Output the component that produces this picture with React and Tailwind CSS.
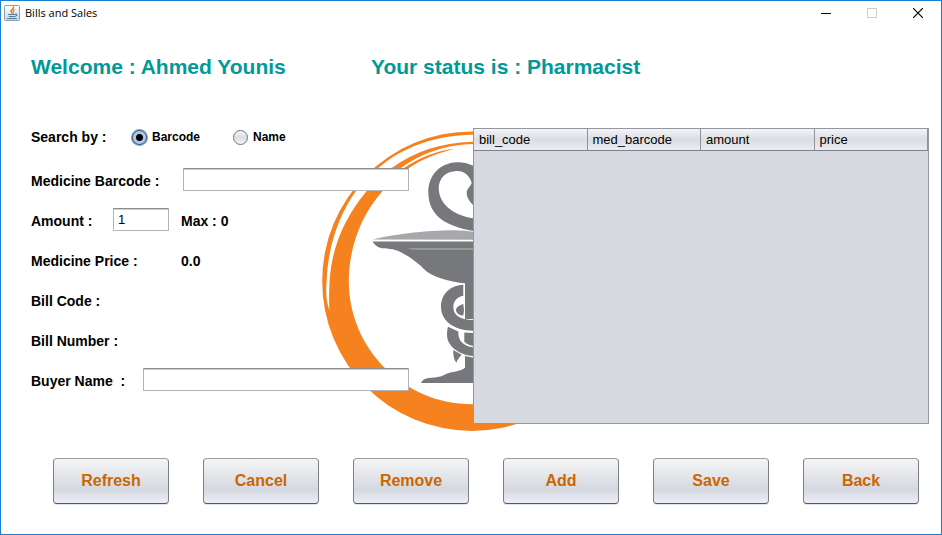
import { useState } from "react";

const BUTTONS = ["Refresh", "Cancel", "Remove", "Add", "Save", "Back"];
const COLUMNS = ["bill_code", "med_barcode", "amount", "price"];

const FIELD =
  "mb-[3px] h-[23px] rounded-none border border-[#b4b4b6] border-t-[#8c8c8e] bg-white px-1 font-['Liberation_Sans',sans-serif] text-[13px] font-normal text-black shadow-[inset_0_1px_0_#cfcfd0] outline-none";

const RADIO =
  "h-[15px] w-[15px] shrink-0 appearance-none rounded-full border border-[#6f737b] bg-linear-to-b from-[#f6f7f9] via-[#dcdee4] to-[#f4f5f8] outline-none checked:border-[#1f3f66] checked:bg-[radial-gradient(circle_at_center,#000_0,#000_3px,#a9c3e0_4px,#cfdff0_100%)] checked:shadow-[0_0_0_1px_#6ea3d6]";

function JavaIcon() {
  return (
    <svg width="16" height="16" viewBox="0 0 16 16" aria-hidden="true">
      <defs>
        <linearGradient id="tile" x1="0" y1="0" x2="0" y2="1">
          <stop offset="0" stopColor="#ffffff" />
          <stop offset="1" stopColor="#c9d6e0" />
        </linearGradient>
      </defs>
      <rect x="0.5" y="0.5" width="15" height="15" rx="1" fill="url(#tile)" stroke="#8b9cab" />
      <g fill="none" strokeLinecap="round">
        <path d="M9.6 2c.5 1.900-3 2.500-2.600 4.200.1.700.800 1 .900 1.800" stroke="#e8791c" strokeWidth="1.500" />
        <path d="M10.600 4.800c-1.500.700-1.900 1.300-1.200 2.100.4.500.1.900-.3 1.200" stroke="#e8791c" strokeWidth="1.200" />
        <path d="M4.500 9.500h6M5.200 11.500h5M11.500 9.100c1.800-.5 1.900 1.600-.2 2.200" stroke="#4d7896" strokeWidth="1.100" />
        <path d="M3.500 13.500h8.800" stroke="#4d7896" strokeWidth="1.100" />
      </g>
    </svg>
  );
}

function PharmacyLogo() {
  return (
    <svg
      className="pointer-events-none absolute top-[3px] left-[309px]"
      width="320"
      height="320"
      viewBox="310 120 320 320"
      aria-hidden="true"
    >
      <circle cx="472" cy="281.200" r="149.800" fill="#f6821f" />
      <path
        fill="#fff"
        d="M329.300 310C325.800 300 325.800 290 326.700 280C328 245 340 213 356 191C363 181 370 174 378.300 168C405 145.500 437 135.500 472 134.800C540 134.800 590 180 605 235C580 175 530 141.500 472 141.800C441 142.500 414 152 391.700 168C382 174.500 374 182 366.700 191C345 217 332 246 329.700 280C329 291 329 300 329.300 310Z"
      />
      <path
        fill="#fff"
        d="M348.800 281C349 246 362 214 382.700 191C391 181.500 399 174 409 168C422 159 437 153.500 454 149C436 150.500 418 158.500 404 168C398 171.500 393 176 388 181C392 176 396 171.500 400.700 168C422 153 445 145 472 144C540 146 595 205 595 281C595 350 540 404.200 472 404.200C404 404.200 348.800 349 348.800 281Z"
      />
      <g fill="#77787b">
        <path d="M473 165.800C468 163 462 162 457 162.200C439 163 428.300 176 428.300 192C428.500 217 447 226 473 231L480 232V219.500L473 218.300C456 215.500 439 206 438.700 188C438.900 178 446 171.200 457 171C465 170.800 470.500 177 471.700 183.300C470 187 466.700 189 466.700 192.700C466.700 198 470 201.500 473 205L480 206V170Z" />
        <path d="M372.700 241.600H485V283.300H475V319H465V283.300C458 282.800 450 281.300 443 279C430 275 426 271.500 421 266C414 260 409 256.500 403 253.500C396 249 389 248.700 382 248.300C377 247.600 374 244 372.700 241.600Z" />
        <path d="M463.300 284.700C449 285.500 441 295 441 306.700C441 320 453 330.500 473 330.700H480V320H473C460 320 453.300 315 453.300 307.300C453.300 301 457 297 463.300 295.700Z" />
        <path d="M463.300 304C459 305.500 456 307 456 310.500C456.500 313.500 460 315.600 463.300 315.600L464 310Z" />
        <path d="M448 326.700L458.300 331.400C457.700 341 464 346 473 347.300H480V356H473C459 355 447 346 447 335C447 332 447.300 329 448 326.700Z" />
        <path d="M464.300 332.500L480 333.500V346H473C469 345 466 343.500 464.300 341.700Z" />
        <path d="M453.300 350L461.700 354.800C459.500 357 457.500 360 456.300 362.700C454 360 453 355 453.300 350Z" />
        <path d="M465 356L473 357.500H482V383H421C422 380 425 378.600 429 378C437 377.300 441 377 446 374C451 371.500 461 371.500 465 367.700Z" />
      </g>
      <path fill="#a7a8ab" d="M372.700 239.500C394 234 428 230.500 453 230.300C463 230.300 468 231 473 232H480V239.800Z" />
      <path fill="#98999c" d="M408 248H480V250H416C412 249.800 410 249 408 248Z" />
    </svg>
  );
}

function Row({ children }) {
  return <div className="flex h-10 items-center">{children}</div>;
}

export default function App() {
  const [mode, setMode] = useState("barcode");
  const windowButton = "flex h-6 w-[46px] items-center justify-center";

  return (
    <div className="flex min-h-screen flex-col border border-[#1a7ed4] bg-white font-['Liberation_Sans',Arial,sans-serif] text-black">
      <header className="flex h-6 items-center">
        <div className="flex items-center gap-[5px] pl-[3px]">
          <JavaIcon />
          <h1 className="font-['Open_Sans',sans-serif] text-[11px] leading-4">Bills and Sales</h1>
        </div>
        <div className="ml-auto flex">
          <button type="button" aria-label="Minimize" className={windowButton}>
            <svg width="10" height="10" viewBox="0 0 10 10"><path d="M0 5.500h10" stroke="#000" /></svg>
          </button>
          <button type="button" aria-label="Maximize" className={windowButton} disabled>
            <svg width="10" height="10" viewBox="0 0 10 10"><path d="M.5.5h9v9h-9z" fill="none" stroke="#ccc" /></svg>
          </button>
          <button type="button" aria-label="Close" className={windowButton}>
            <svg width="10" height="10" viewBox="0 0 10 10"><path d="M0 0l10 10M10 0L0 10" stroke="#000" strokeWidth="1.200" /></svg>
          </button>
        </div>
      </header>

      <div className="flex pt-7 pl-[30px] text-[21px] leading-7 font-bold text-[#009999]">
        <p className="w-[340px]">Welcome : Ahmed Younis</p>
        <p>Your status is : Pharmacist</p>
      </div>

      <main className="relative mt-9 flex items-start pr-3">
        <PharmacyLogo />
        <form className="relative w-[472px] shrink-0 pr-16 pl-[30px] text-sm font-bold">
          <div className="flex h-11 items-center pb-1" role="radiogroup" aria-label="Search by">
            <span className="w-[101px]">Search by :</span>
            <label className="flex w-[101px] items-center gap-[5px] text-xs">
              <input type="radio" name="mode" className={RADIO} checked={mode === "barcode"} onChange={() => setMode("barcode")} />
              Barcode
            </label>
            <label className="flex items-center gap-[5px] text-xs">
              <input type="radio" name="mode" className={RADIO} checked={mode === "name"} onChange={() => setMode("name")} />
              Name
            </label>
          </div>
          <Row>
            <label htmlFor="barcode" className="w-[152px] shrink-0">Medicine Barcode :</label>
            <input id="barcode" className={`${FIELD} min-w-0 flex-1`} />
          </Row>
          <Row>
            <label htmlFor="amount" className="w-[82px]">Amount :</label>
            <input id="amount" defaultValue="1" className={`${FIELD} w-14`} />
            <span className="pl-3">Max : 0</span>
          </Row>
          <Row>
            <span className="w-[150px]">Medicine Price :</span>
            <span>0.0</span>
          </Row>
          <Row>Bill Code :</Row>
          <Row>Bill Number :</Row>
          <Row>
            <label htmlFor="buyer" className="w-28 shrink-0 whitespace-pre">{"Buyer Name  :"}</label>
            <input id="buyer" className={`${FIELD} min-w-0 flex-1`} />
          </Row>
        </form>

        <div className="relative mt-[11px] h-[296px] flex-1 border border-[#9297a1] bg-[#d6d9e0]">
          <table className="w-full table-fixed border-separate border-spacing-0 text-[13px]">
            <thead>
              <tr>
                {COLUMNS.map((name) => (
                  <th
                    key={name}
                    scope="col"
                    className="h-[22px] border-r border-b border-r-[#8f939c] border-b-[#7d828d] bg-linear-to-b from-[#f4f5f7] via-[#dcdde2] to-[#e9ecf4] px-[5px] py-0 text-left leading-5 font-normal"
                  >
                    {name}
                  </th>
                ))}
              </tr>
            </thead>
            <tbody />
          </table>
        </div>
      </main>

      <footer className="mt-auto flex justify-between pr-[22px] pb-[30px] pl-[52px]">
        {BUTTONS.map((name) => (
          <button
            key={name}
            type="button"
            className="h-[46px] w-[116px] rounded border border-[#7b7f87] border-t-[#9a9da2] border-b-[#53565c] bg-linear-to-b from-[#f4f5f6] from-0% via-[#d5d8df] via-70% to-[#eceff8] to-100% text-base font-bold text-[#cc6600] shadow-[0_1px_0_#e4e5e8]"
          >
            {name}
          </button>
        ))}
      </footer>
    </div>
  );
}
